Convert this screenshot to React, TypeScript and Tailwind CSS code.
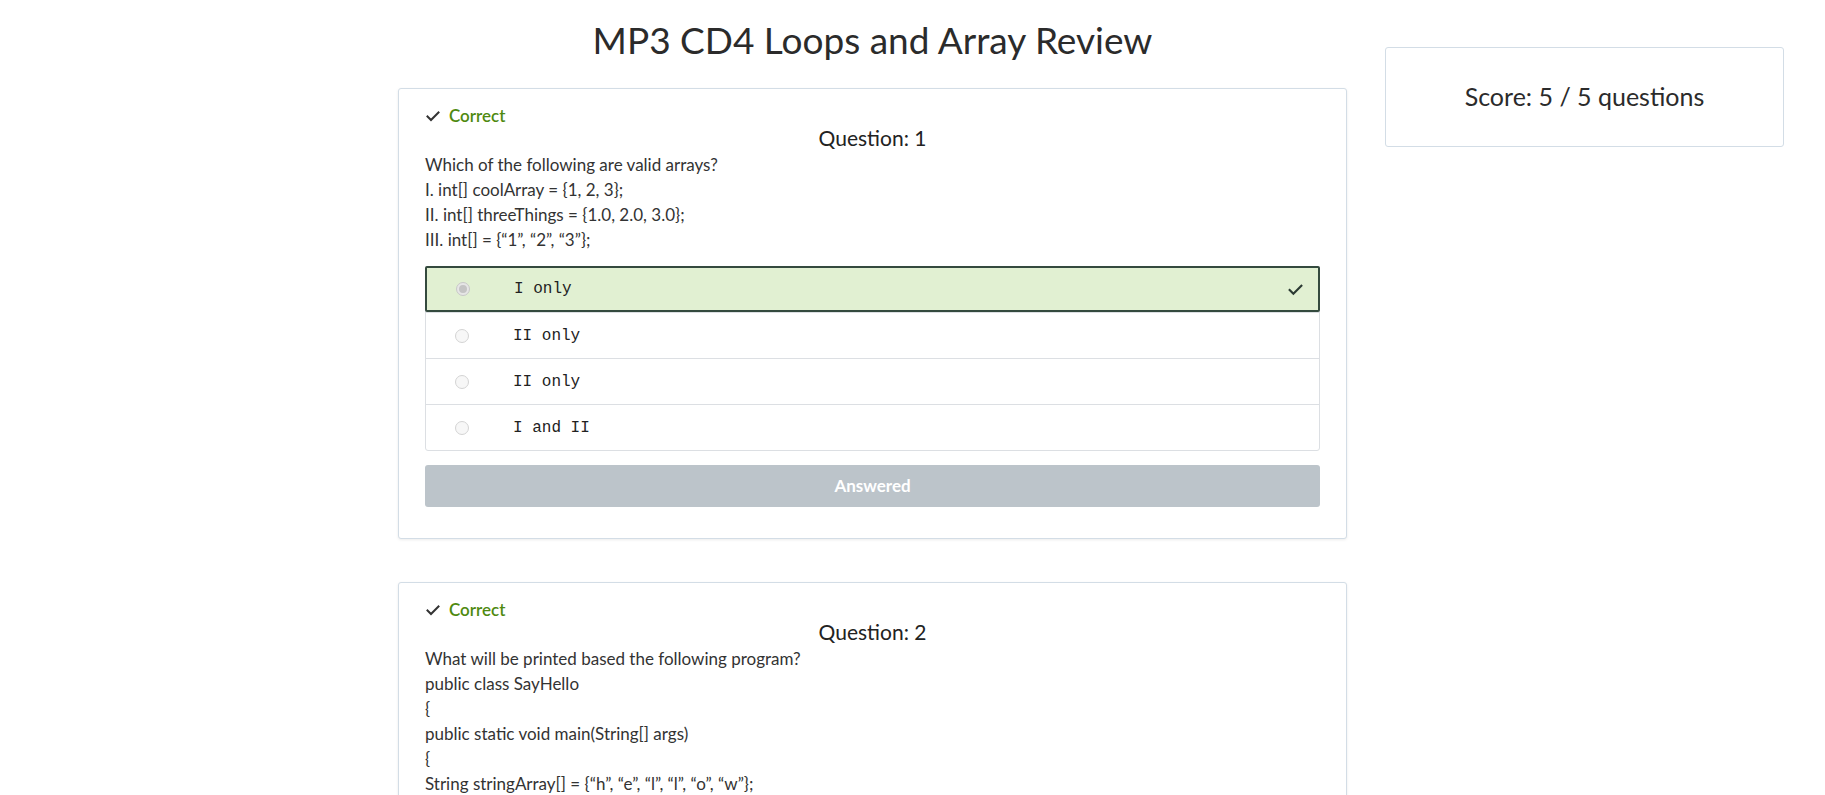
import React from 'react';

const sans = "font-['Lato','Liberation_Sans',sans-serif]";

type Question = {
  number: number;
  lines: string[];
  options: string[];
  answer: number;
};

const questions: Question[] = [
  {
    number: 1,
    lines: [
      'Which of the following are valid arrays?',
      'I. int[] coolArray = {1, 2, 3};',
      'II. int[] threeThings = {1.0, 2.0, 3.0};',
      'III. int[] = {“1”, “2”, “3”};',
    ],
    options: ['I only', 'II only', 'II only', 'I and II'],
    answer: 0,
  },
  {
    number: 2,
    lines: [
      'What will be printed based the following program?',
      'public class SayHello',
      '{',
      'public static void main(String[] args)',
      '{',
      'String stringArray[] = {“h”, “e”, “l”, “l”, “o”, “w”};',
      'for (String s : stringArray)',
      '{',
      'System.out.print(s);',
      '}',
      '}',
      '}',
    ],
    options: ['hello', 'hellow', 'h e l l o w', 'Error'],
    answer: 1,
  },
];

const Check = ({ className }: { className?: string }) => (
  <svg viewBox="0 0 16 16" className={className} fill="none" stroke="currentColor" strokeWidth="2" strokeLinecap="square">
    <path d="M2.5 8.5l3.5 3.5 7.5-7.5" />
  </svg>
);

const QuestionCard = ({ q }: { q: Question }) => (
  <div className="bg-white border border-[#d3dde6] rounded-[3px] shadow-[0_1px_3px_rgba(0,0,0,0.08)] px-[26px] pt-[17px] pb-[31px]">
    <div className="flex items-center h-5 text-[17px] font-semibold text-[#4f8a10]">
      <Check className="w-[16px] h-[16px] text-[#333] mr-[8px]" />
      Correct
    </div>
    <h2 className="text-center text-[21px] leading-6 text-[#222]">Question: {q.number}</h2>
    <div className="mt-[2px] text-[17px] leading-[25px] text-[#333]">
      {q.lines.map((line, i) => (
        <div key={i}>{line}</div>
      ))}
    </div>
    <div className="mt-[14px] border border-[#dcdfe3] rounded-[3px]">
      {q.options.map((opt, i) => {
        const selected = i === q.answer;
        return (
          <div
            key={i}
            className={
              selected
                ? 'flex items-center h-[46px] -m-px mb-0 bg-[#e1f0d2] border-2 border-[#344a3e] rounded-[2px] pl-[29px] pr-[14px]'
                : 'flex items-center h-[46px] border-t border-[#dcdfe3] first:border-t-0 pl-[29px] pr-[14px]'
            }
          >
            <span
              className={
                selected
                  ? 'w-[14px] h-[14px] rounded-full border border-[#c8c8c8] bg-[#e6e6e6] flex items-center justify-center'
                  : 'w-[14px] h-[14px] rounded-full border border-[#d4d4d4] bg-[#f7f7f7]'
              }
            >
              {selected && <span className="w-[8px] h-[8px] rounded-full bg-[#c4c4c4]" />}
            </span>
            <span className="ml-[44px] font-['Liberation_Mono',monospace] text-[16px] text-[#222]">{opt}</span>
            {selected && <Check className="ml-auto w-[17px] h-[17px] text-[#2b3a33]" />}
          </div>
        );
      })}
    </div>
    <button
      type="button"
      disabled
      className="mt-[14px] w-full h-[42px] rounded-[3px] bg-[#bcc4ca] text-white text-[17px] font-bold"
    >
      Answered
    </button>
  </div>
);

export default function App() {
  return (
    <div className={`min-h-screen bg-white ${sans} text-[#333]`}>
      <div className="flex pl-[398px] pt-[18px]">
        <main className="w-[949px]">
          <h1 className="text-center text-[37px] leading-[44px] text-[#2b2b2b] mb-[26px]">
            MP3 CD4 Loops and Array Review
          </h1>
          <div className="flex flex-col gap-[43px]">
            {questions.map((q) => (
              <QuestionCard key={q.number} q={q} />
            ))}
          </div>
        </main>
        <aside className="ml-[38px] w-[399px] pt-[29px]">
          <div className="h-[100px] flex items-center justify-center border border-[#d3dde6] rounded-[3px] text-[25px] text-[#2b2b2b]">
            Score: 5 / 5 questions
          </div>
        </aside>
      </div>
    </div>
  );
}
